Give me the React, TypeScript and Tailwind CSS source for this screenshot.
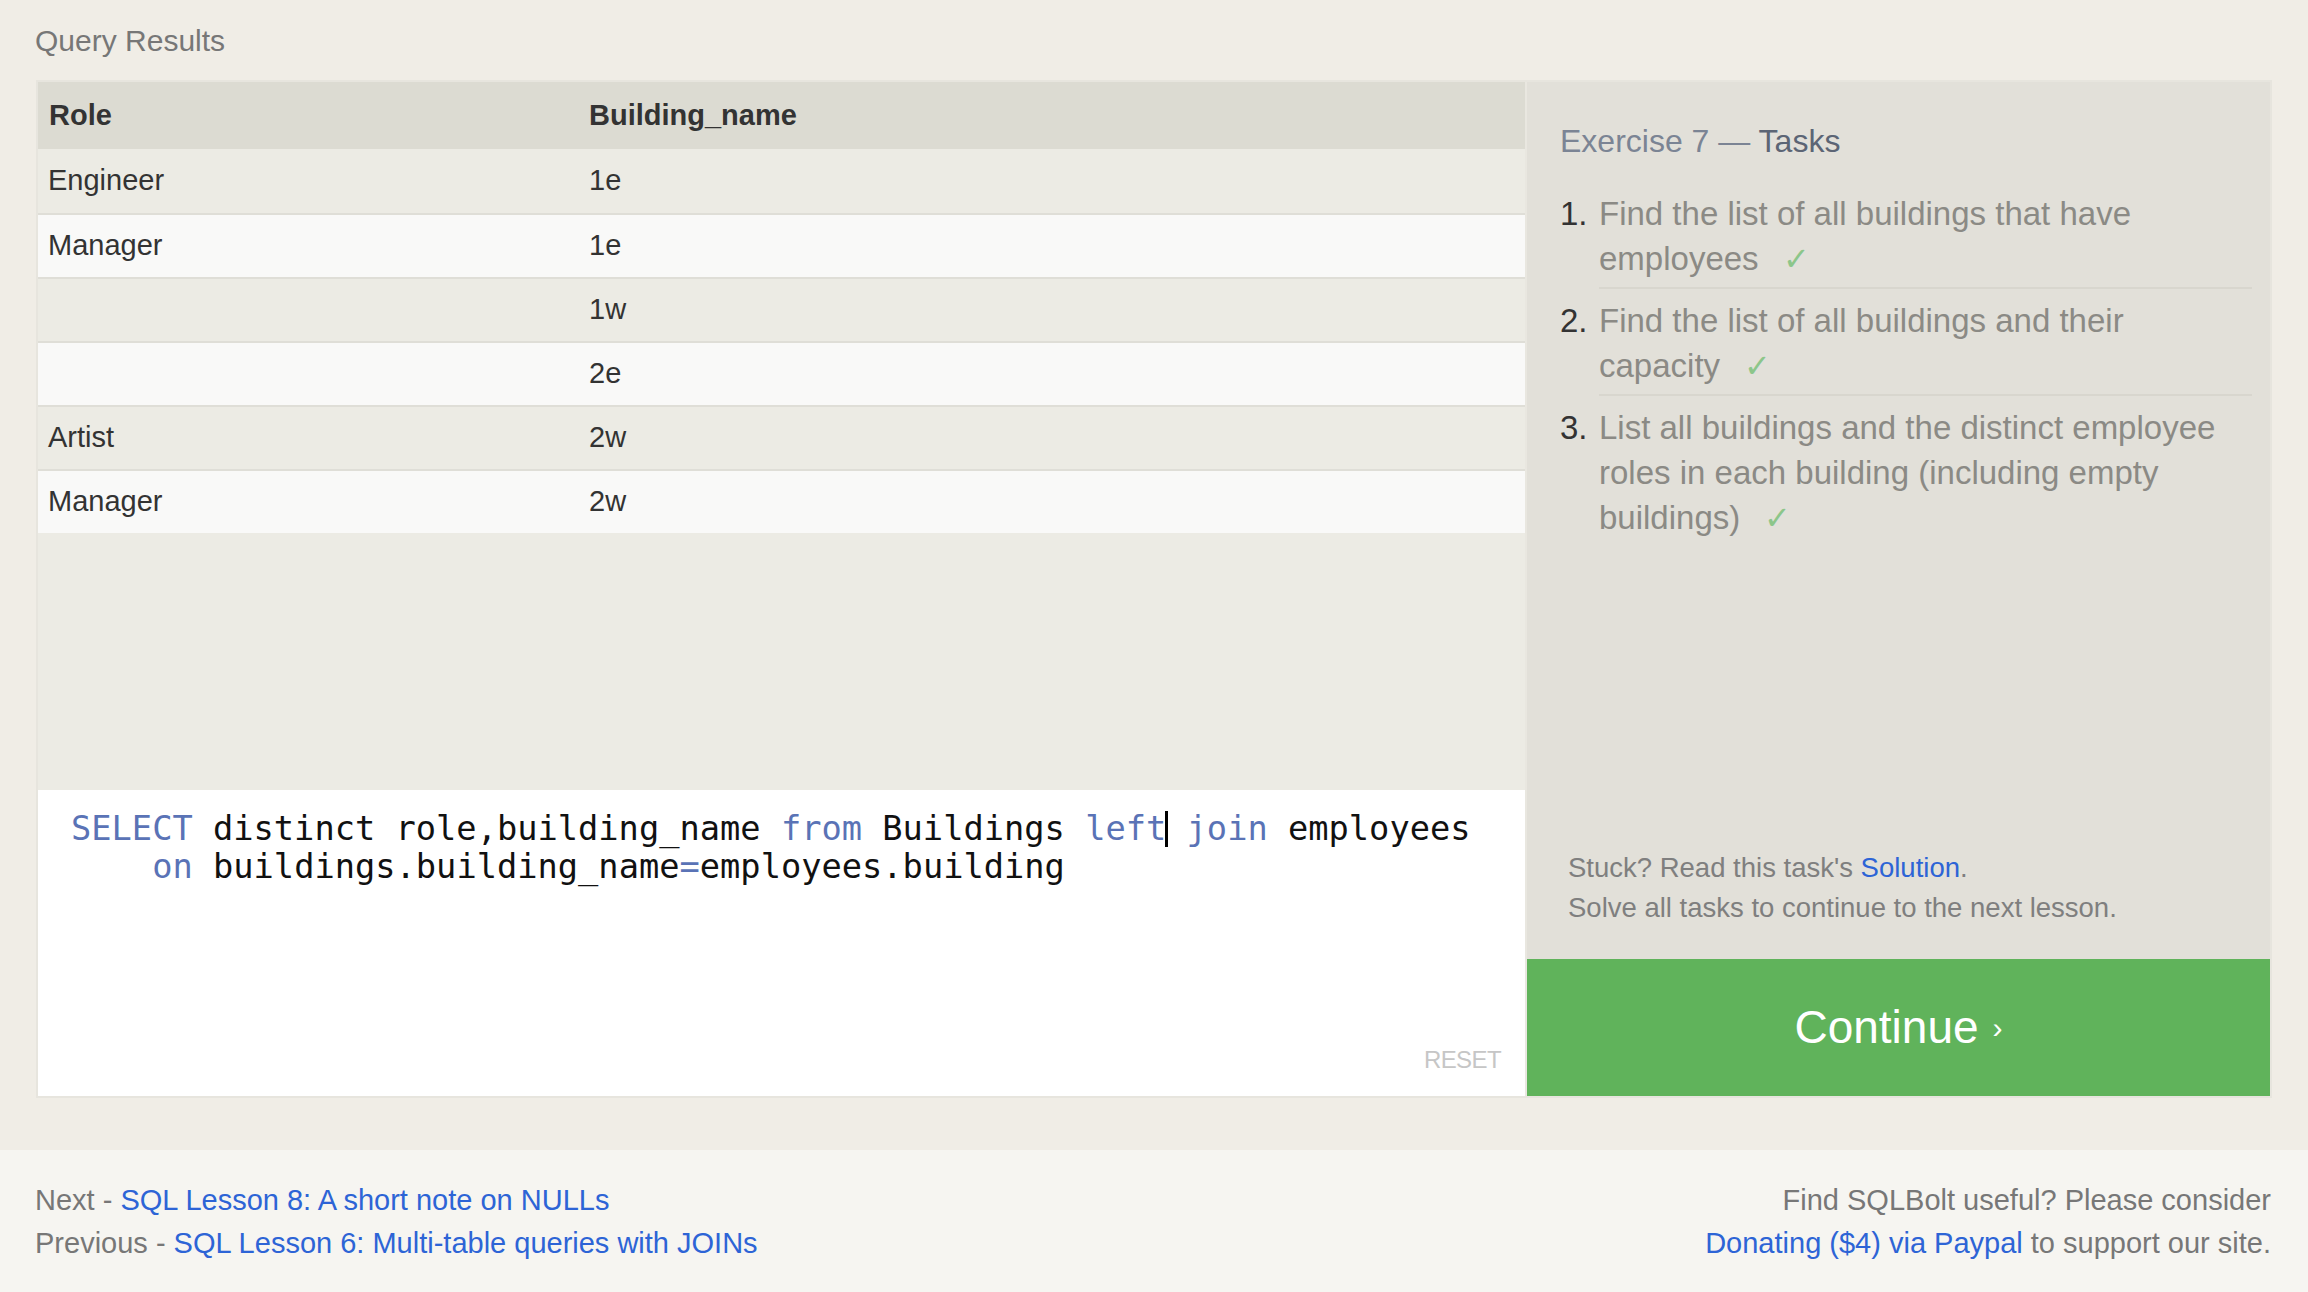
import React from 'react'

const rows = [
  { role: 'Engineer', building: '1e' },
  { role: 'Manager', building: '1e' },
  { role: '', building: '1w' },
  { role: '', building: '2e' },
  { role: 'Artist', building: '2w' },
  { role: 'Manager', building: '2w' },
]

const tasks = [
  'Find the list of all buildings that have employees',
  'Find the list of all buildings and their capacity',
  'List all buildings and the distinct employee roles in each building (including empty buildings)',
]

function Kw({ children }: { children: React.ReactNode }) {
  return <span className="text-[#5a73b6]">{children}</span>
}

function Editor() {
  return (
    <div className="h-[306px] bg-white flex flex-col justify-between pl-[33px] pr-[24px] pt-[20px] pb-[24px]">
      <pre className="font-['DejaVu_Sans_Mono',monospace] text-[33.7px] leading-[38px] text-[#111] whitespace-pre">
        <Kw>SELECT</Kw> distinct role,building_name <Kw>from</Kw> Buildings <Kw>left</Kw>
        <span className="relative inline-block w-0 h-[38px] align-top">
          <span className="absolute left-[-1px] top-[1px] w-[3px] h-[36px] bg-black" />
        </span>{' '}
        <Kw>join</Kw> employees
        {'\n    '}
        <Kw>on</Kw> buildings.building_name<Kw>=</Kw>employees.building
      </pre>
      <div className="self-end text-[24px] leading-[24px] text-[#c6c6c6] tracking-tight">RESET</div>
    </div>
  )
}

function ResultsTable() {
  return (
    <div className="h-[708px] bg-[#ecebe4] text-[29px] text-[#333]">
      <div className="h-[67px] bg-[#dcdbd2] flex items-center font-bold">
        <div className="w-[551px] pl-[11px]">Role</div>
        <div>Building_name</div>
      </div>
      {rows.map((r, i) => (
        <div
          key={i}
          className={
            'h-[64px] flex items-center ' +
            (i % 2 === 1 ? 'bg-[#f9f9f8] ' : 'bg-[#ecebe4] ') +
            (i > 0 ? 'border-t-2 border-[#dfded7]' : '')
          }
        >
          <div className="w-[551px] pl-[10px]">{r.role}</div>
          <div>{r.building}</div>
        </div>
      ))}
    </div>
  )
}

function TasksPanel() {
  return (
    <div className="flex-1 flex flex-col bg-[#e2e0d9]">
      <div className="flex-1 flex flex-col justify-between">
        <div className="pt-[37px] pl-[33px] pr-[18px]">
          <h2 className="text-[32px] leading-[45px] text-[#7b8494]">
            Exercise 7 — <span className="text-[#5c6575]">Tasks</span>
          </h2>
          <ol className="mt-[27px]">
            {tasks.map((t, i) => (
              <li
                key={i}
                className={'flex text-[33px] leading-[45px] ' + (i > 0 ? 'pt-[9px]' : '')}
              >
                <span className="w-[39px] shrink-0 text-[#333]">{i + 1}.</span>
                <div
                  className={'flex-1 ' + (i < tasks.length - 1 ? 'border-b-2 border-[#d8d6ce] pb-[6px]' : '')}
                >
                  <p className="text-[#8b8a85] pr-[20px]">
                    {t}
                    <span className="ml-[24px] leading-none text-[#8cc68a] font-['DejaVu_Sans',sans-serif] text-[32px] font-light">
                      ✓
                    </span>
                  </p>
                </div>
              </li>
            ))}
          </ol>
        </div>
        <div className="pl-[41px] pb-[31px] text-[27.5px] leading-[40px] text-[#7f7f7f]">
          <p>
            Stuck? Read this task's <a className="text-[#2d64d6]">Solution</a>.
          </p>
          <p>Solve all tasks to continue to the next lesson.</p>
        </div>
      </div>
      <button className="h-[137px] bg-[#60b35b] text-white text-[46px] flex items-center justify-center gap-[14px]">
        Continue <span className="text-[30px]">›</span>
      </button>
    </div>
  )
}

export default function App() {
  return (
    <div className="min-h-screen bg-[#f0ede6] flex flex-col font-['Liberation_Sans',Arial,sans-serif]">
      <div className="px-[36px]">
        <div className="h-[80px] flex items-center text-[30px] text-[#777] -ml-[1px]">Query Results</div>
        <div className="flex border-2 border-[#e7e5de] bg-[#e7e5de]">
          <div className="w-[1487px] flex flex-col">
            <ResultsTable />
            <Editor />
          </div>
          <div className="w-[2px] bg-[#e9e7e0]" />
          <TasksPanel />
        </div>
      </div>
      <footer className="mt-[52px] flex-1 bg-[#f6f5f1] flex justify-between pl-[35px] pr-[37px] pt-[29px] pb-[26px] text-[29px] leading-[43px] text-[#777]">
        <div>
          <p>
            Next - <a className="text-[#2d64d6]">SQL Lesson 8: A short note on NULLs</a>
          </p>
          <p>
            Previous - <a className="text-[#2d64d6]">SQL Lesson 6: Multi-table queries with JOINs</a>
          </p>
        </div>
        <div className="text-right">
          <p>Find SQLBolt useful? Please consider</p>
          <p>
            <a className="text-[#2d64d6]">Donating ($4) via Paypal</a> to support our site.
          </p>
        </div>
      </footer>
    </div>
  )
}
